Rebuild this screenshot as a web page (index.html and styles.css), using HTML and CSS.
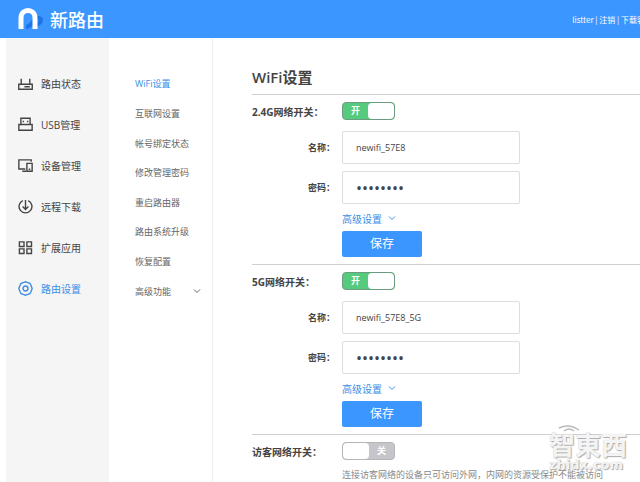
FILE: index.html
```html
<!DOCTYPE html>
<html lang="zh-CN">
<head>
<meta charset="UTF-8">
<title>新路由</title>
<link rel="stylesheet" href="styles.css">
</head>
<body>
<header class="header">
    <a class="logo" href="#">
        <svg class="logo-mark" viewBox="0 0 28 24">
            <path d="M9 20C15 20 17 11 21 11C26 11 25 16 18 18" fill="none" stroke="#1b74e8" stroke-width="4"/>
            <path d="M4 22V11C4 1 18 1 18 11V22" fill="none" stroke="#fff" stroke-width="5"/>
        </svg>
        <span>新路由</span>
    </a>
    <nav class="user">
        <a href="#">listter</a> | <a href="#">注销</a> | <a href="#">下载客户端</a>
    </nav>
</header>
<div class="page">
    <!-- 主菜单 -->
    <nav class="side">
        <a href="#">
            <svg class="icon" viewBox="0 0 14 14"><path d="M.7 7.700h12.600v4.600H.7zM3 7.500V2.500M11 7.500V2.500M6 10h5"/></svg>路由状态
        </a>
        <a href="#">
            <svg class="icon" viewBox="0 0 14 14"><path d="M2.700 7V1.200h8.600V7M.8 7h12.400v5.300H.8zM5 3.500v1.500M9 3.500v1.500"/></svg>USB管理
        </a>
        <a href="#">
            <svg class="icon" viewBox="0 0 14 14"><path d="M12.300 3.500V1.700H.8v8.600h6M4 12.400h3.500M8.300 5h4.900v7.400H8.300zM10 10.500h1.500"/></svg>设备管理
        </a>
        <a href="#">
            <svg class="icon" viewBox="0 0 14 14"><path d="M4.500 1.500a6 6 0 1 0 5 0M7 1v8.500M4.300 7 7 9.700 9.700 7"/></svg>远程下载
        </a>
        <a href="#">
            <svg class="icon" viewBox="0 0 14 14"><path d="M1.300 1.700h4.300v4.300H1.300zM8.300 1.700h4.300v4.300H8.300zM1.300 8.300h4.300v4.300H1.300zM8.300 8.300h4.300v4.300H8.300z"/></svg>扩展应用
        </a>
        <a class="on" href="#">
            <svg class="icon" viewBox="0 0 14 14"><path d="M5.500 1.300 7 .8l1.500.5 2.600.9 1.100 2 1 2.800-1 2.800-1.100 2-2.600.9-1.500.5-1.500-.5-2.600-.9-1.100-2-1-2.800 1-2.800 1.100-2z"/><circle cx="7" cy="7" r="2.300"/></svg>路由设置
        </a>
    </nav>
    <!-- 子菜单 -->
    <nav class="sub">
        <a class="on" href="#">WiFi设置</a>
        <a href="#">互联网设置</a>
        <a href="#">帐号绑定状态</a>
        <a href="#">修改管理密码</a>
        <a href="#">重启路由器</a>
        <a href="#">路由系统升级</a>
        <a href="#">恢复配置</a>
        <a href="#">高级功能 <svg class="arrow" viewBox="0 0 8 8"><path d="M1 2.500 4 5.500 7 2.500"/></svg></a>
    </nav>
    <main class="main">
        <h1>WiFi设置</h1>
        <section class="band">
            <div class="row">
                <span class="title">2.4G网络开关：</span>
                <label class="switch"><input type="checkbox" aria-label="2.4G网络开关" checked><span class="word">开</span><span class="knob"></span></label>
            </div>
            <form class="fields">
                <label for="name24">名称：</label>
                <input id="name24" type="text" value="newifi_57E8">
                <label for="pass24">密码：</label>
                <input id="pass24" type="password" value="12345678">
            </form>
            <div class="actions">
                <a href="#">高级设置 <svg class="arrow" viewBox="0 0 8 8"><path d="M1 2.500 4 5.500 7 2.500"/></svg></a>
                <button type="button">保存</button>
            </div>
        </section>
        <section class="band">
            <div class="row">
                <span class="title">5G网络开关：</span>
                <label class="switch"><input type="checkbox" aria-label="5G网络开关" checked><span class="word">开</span><span class="knob"></span></label>
            </div>
            <form class="fields">
                <label for="name5">名称：</label>
                <input id="name5" type="text" value="newifi_57E8_5G">
                <label for="pass5">密码：</label>
                <input id="pass5" type="password" value="12345678">
            </form>
            <div class="actions">
                <a href="#">高级设置 <svg class="arrow" viewBox="0 0 8 8"><path d="M1 2.500 4 5.500 7 2.500"/></svg></a>
                <button type="button">保存</button>
            </div>
        </section>
        <section class="band guest">
            <div class="row">
                <span class="title">访客网络开关：</span>
                <label class="switch off"><input type="checkbox" aria-label="访客网络开关"><span class="knob"></span><span class="word">关</span></label>
            </div>
            <p class="note">连接访客网络的设备只可访问外网，内网的资源受保护不能被访问</p>
        </section>
    </main>
</div>
<!-- 水印 -->
<div class="mark">
    <svg class="mark-wave" viewBox="0 0 24 8"><path d="M2 4Q12-1 22 6M7 7Q12 3 17 7"/></svg>
    <div class="mark-name">智東西</div>
    <div class="mark-site">zhidx.com</div>
</div>
</body>
</html>
```

FILE: styles.css
```css
*{box-sizing:border-box;}
body{position:relative; margin:0; min-height:100vh; display:flex; flex-direction:column; overflow:hidden; background:#fff; color:#444; font-family:"Open Sans","Noto Sans CJK SC",sans-serif; font-size:9px;}
a{color:inherit; text-decoration:none;}

.header{display:flex; align-items:center; justify-content:space-between; height:38px; padding-left:17px; background:#3b96ff; color:#fff; overflow:hidden;}
.logo{display:flex; align-items:center; gap:5px; font-size:18px; font-weight:500; line-height:24px; font-family:"Noto Sans CJK SC",sans-serif;}
.logo-mark{width:28px; height:24px;}
.user{flex:none; margin-right:-21px; font-family:"Noto Sans CJK SC",sans-serif; font-size:8px; white-space:nowrap;}

.page{flex:1; display:flex; padding-left:6px;}
.side{flex:none; width:103px; padding:25px 0 0 12px; background:#f5f5f5; font-size:10px;}
.side a{display:flex; align-items:center; gap:8px; height:41px;}
.icon{width:15px; height:15px; fill:none; stroke:currentColor; stroke-width:1.3;}
.side .on,.sub .on{color:#3a8ee6;}

.sub{flex:none; display:grid; grid-auto-rows:1fr; width:103px; height:268px; padding:31px 11px 0 26px; color:#666;}
.sub a{display:flex; align-items:center; justify-content:space-between;}
.arrow{width:8px; height:8px; fill:none; stroke:currentColor; stroke-width:1;}

.main{flex:1; min-width:0; padding-left:39px; border-left:1px solid #eee;}
h1{margin:0; padding:29px 0 7px; font-size:15px; line-height:20px; font-weight:600;}
.band{padding:7px 0; border-top:1px solid #d0d0d0;}
.row{display:flex; align-items:center; height:18px; margin-bottom:11px;}
.title{width:90px; font-size:10px; font-weight:bold; white-space:nowrap;}

.switch{position:relative; display:flex; width:53px; height:18px; border:1px solid #6b9c80; border-radius:4px; background:#57cb7d; color:#fff; font-weight:bold; line-height:16px; text-align:center; overflow:hidden;}
.switch input{position:absolute; inset:0; margin:0; opacity:0;}
.switch .word{flex:1;}
.switch .knob{width:26px; border-radius:4px; background:#fff;}
.switch.off{border-color:#b5b5b8; background:#c6c6ca;}

.fields{display:grid; grid-template-columns:90px minmax(0,178px); row-gap:7px; align-items:center;}
.fields label{padding-right:7px; text-align:right; font-weight:bold;}
.fields input{width:100%; height:33px; padding:0 13px; border:1px solid #ddd; border-radius:2px; background:#fff; color:#444; font-family:inherit; font-size:9px; outline:none;}
.fields input[type=password]{font-size:16px;}

.actions{display:flex; flex-direction:column; align-items:flex-start; gap:4px; padding:5px 0 0 90px;}
.actions a{display:flex; align-items:center; gap:6px; height:18px; color:#3a8ee6; font-size:10px;}
.actions button{width:80px; height:26px; padding:0; border:0; border-radius:2px; background:#3b96ff; color:#fff; font-family:inherit; font-size:12px; line-height:26px;}

.guest{padding-bottom:0;}
.guest .row{margin-bottom:8px;}
.note{margin:0 0 0 90px; color:#888; line-height:14px; white-space:nowrap;}

.mark{position:absolute; right:4px; bottom:10px; width:87px; color:#f4f4f4; text-shadow:1px 1px 1px #aaa,0 0 1px #ccc;}
.mark-wave{display:block; width:24px; height:8px; margin-left:8px; fill:none; stroke:#bbb; stroke-width:1.5;}
.mark-name{font-size:26px; font-weight:bold; line-height:26px;}
.mark-site{font-family:"DejaVu Sans",sans-serif; font-size:13px; font-weight:bold; line-height:14px;}
```
